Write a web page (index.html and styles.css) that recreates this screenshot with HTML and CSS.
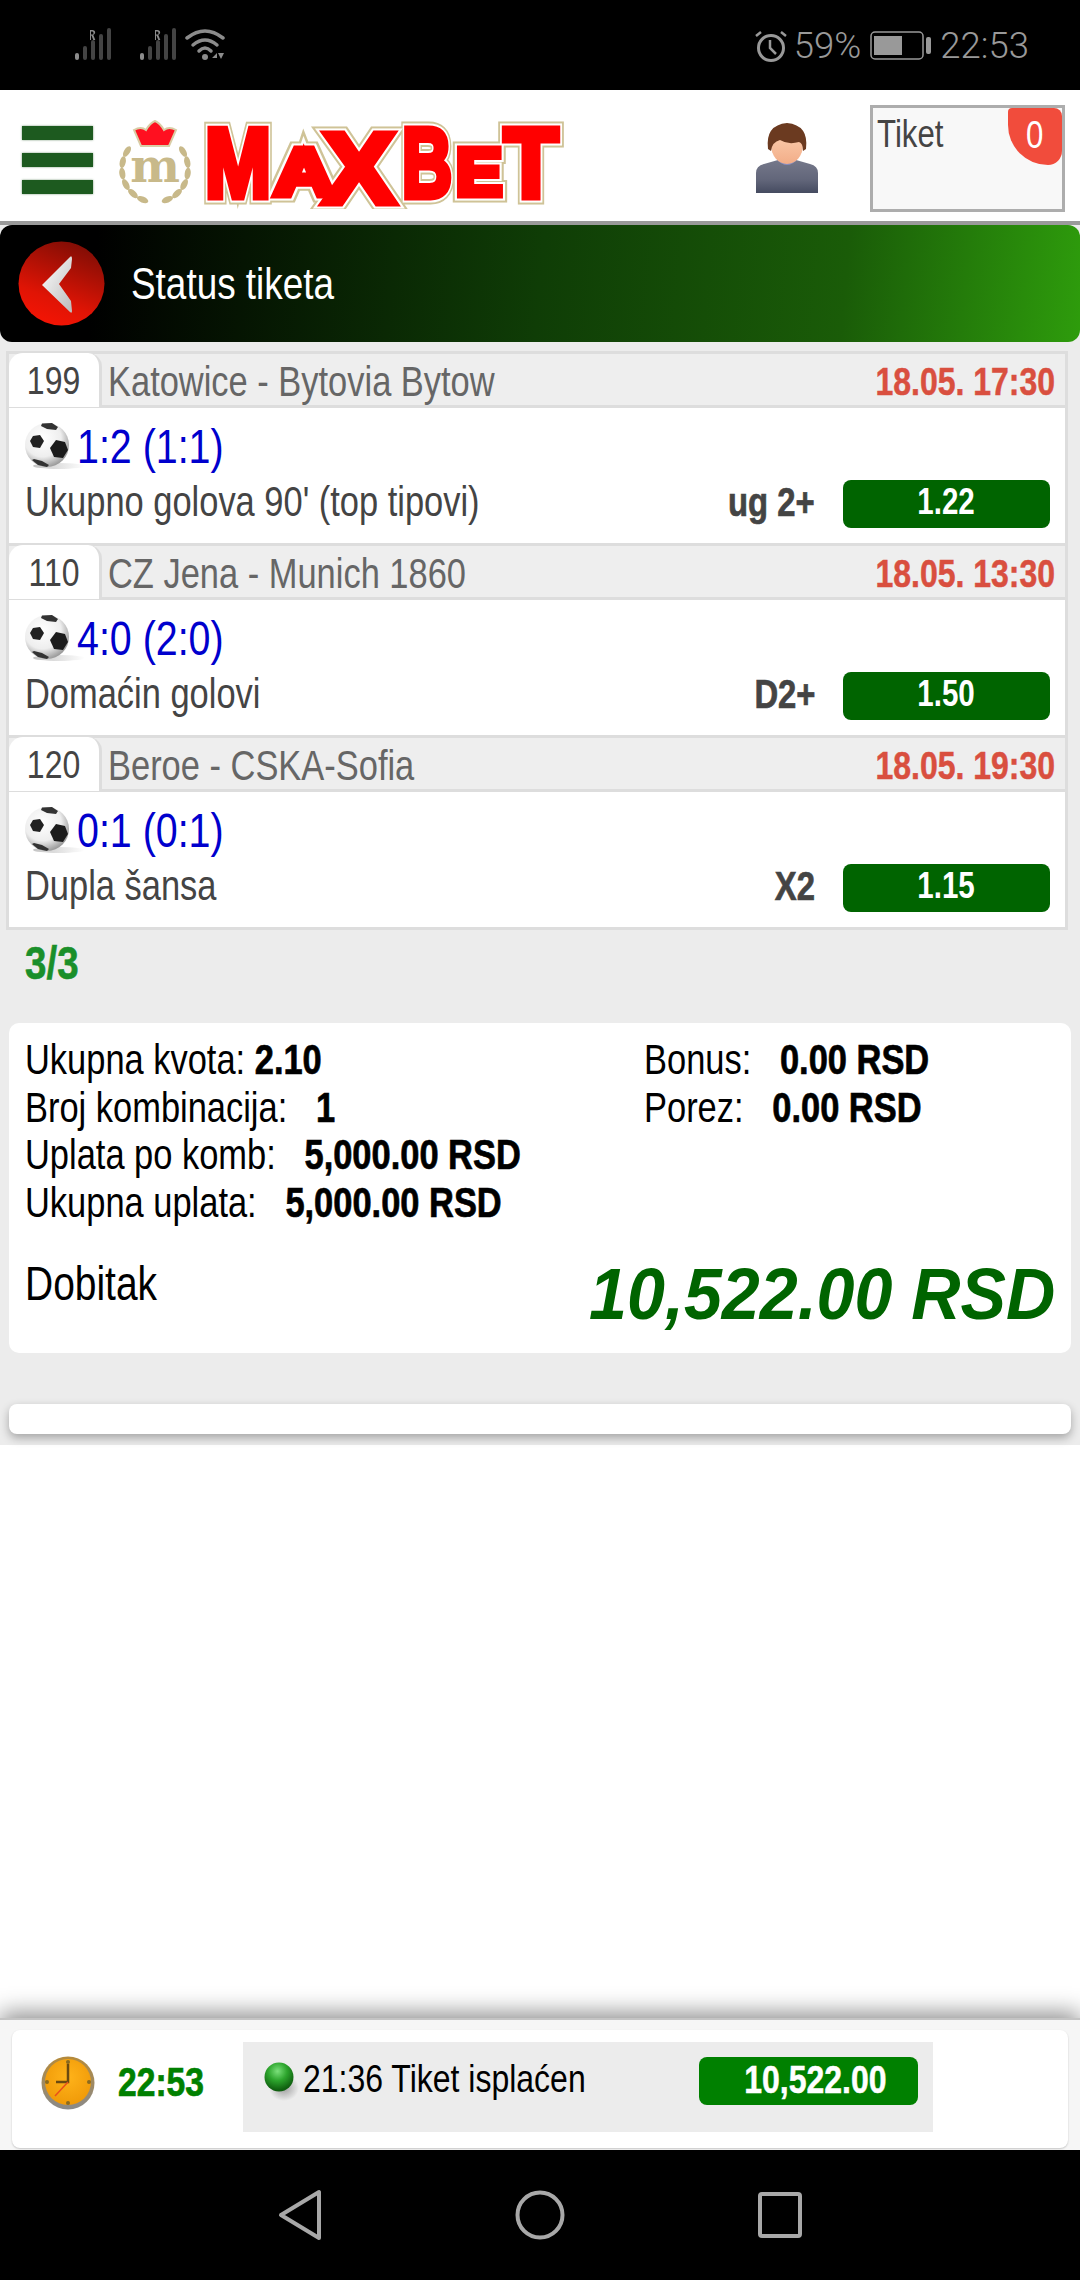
FILE: index.html

```html
<!DOCTYPE html>
<html lang="sr">
<head>
  <meta charset="UTF-8">
  <meta name="viewport" content="width=device-width, initial-scale=1.0">
  <title>Status tiketa</title>
  <link rel="stylesheet" href="styles.css">
</head>
<body>
  <svg class="defs" width="0" height="0" aria-hidden="true">
    <defs>
      <radialGradient id="ballGrad" cx="40%" cy="35%" r="70%">
        <stop offset="0" stop-color="#ffffff"/>
        <stop offset="0.6" stop-color="#eeeeee"/>
        <stop offset="1" stop-color="#8f8f8f"/>
      </radialGradient>
      <linearGradient id="ballShadow" x1="0" x2="1" y1="0" y2="0">
        <stop offset="0" stop-color="#aaaaaa" stop-opacity="0.7"/>
        <stop offset="1" stop-color="#aaaaaa" stop-opacity="0"/>
      </linearGradient>
      <symbol id="ball" viewBox="0 0 60 48">
        <ellipse cx="34" cy="44" rx="26" ry="3" fill="url(#ballShadow)"/>
        <circle cx="22" cy="23" r="22" fill="url(#ballGrad)"/>
        <path d="M31 18l9 2 3 8-5 8-9-1-4-9z" fill="#1c1c1c"/>
        <path d="M8 14l7-1 4 6-4 7-7-1-3-6z" fill="#222"/>
        <path d="M17 1.500l10-.5 6 4-2 3-9-1-6-3z" fill="#333"/>
        <path d="M9 37l8 2 7 4-2 2-9-2-6-5z" fill="#333"/>
      </symbol>
      <symbol id="signal" viewBox="0 0 36 36">
        <path d="M15 2h2.500q2 0 2.500 1.500 .5 1.500 -.5 2.500q-.5 .7 -1.200 1l2 5h-2l-1.800-4.500h-.5v4.500h-1zM16 3.500v3h1.500q1 0 1-1.500t-1-1.500z" fill="#8c8c8c"/>
        <rect x="0" y="25" width="4" height="7" rx="2" fill="#8c8c8c"/>
        <rect x="8" y="18" width="4" height="14" rx="2" fill="#444"/>
        <rect x="16" y="12" width="4" height="20" rx="2" fill="#444"/>
        <rect x="24" y="6" width="4" height="26" rx="2" fill="#444"/>
        <rect x="32" y="0" width="4" height="32" rx="2" fill="#444"/>
      </symbol>
    </defs>
  </svg>

  <div class="status-bar">
    <div class="status-left">
      <svg class="ico-signal" width="36" height="36"><use href="#signal"/></svg>
      <svg class="ico-signal second" width="36" height="36"><use href="#signal"/></svg>
      <svg class="ico-wifi" width="40" height="36" viewBox="0 0 40 36">
        <path d="M2 10Q20 -4 38 10" fill="none" stroke="#8c8c8c" stroke-width="3.500" stroke-linecap="round"/>
        <path d="M8 17Q20 7 32 17" fill="none" stroke="#8c8c8c" stroke-width="3.500" stroke-linecap="round"/>
        <path d="M14 23Q20 17 26 23" fill="none" stroke="#8c8c8c" stroke-width="3.500" stroke-linecap="round"/>
        <circle cx="20" cy="29" r="3" fill="#8c8c8c"/>
        <path d="M27 30l5-5v5zM33 25h6l-3 6z" fill="#8c8c8c"/>
      </svg>
    </div>
    <div class="status-right">
      <svg class="ico-alarm" width="33" height="33" viewBox="0 0 33 33">
        <circle cx="17" cy="18" r="12.500" fill="none" stroke="#999" stroke-width="3"/>
        <path d="M16 10v8l6 6" fill="none" stroke="#999" stroke-width="2.500"/>
        <path d="M2 6l5-4M32 6l-5-4" fill="none" stroke="#999" stroke-width="2.500"/>
      </svg>
      <span class="status-pct">59%</span>
      <svg class="ico-battery" width="62" height="30" viewBox="0 0 62 30">
        <rect x="1" y="1" width="52" height="27" rx="4" fill="none" stroke="#999" stroke-width="1.500"/>
        <rect x="4" y="5" width="28" height="19" fill="#999"/>
        <rect x="56" y="6" width="5" height="17" rx="2" fill="#999"/>
      </svg>
      <span class="status-time">22:53</span>
    </div>
  </div>

  <header class="top-bar">
    <div class="burger"><i></i><i></i><i></i></div>
    <svg class="logo" width="450" height="92" viewBox="0 0 450 92">
      <defs>
        <text id="logoWord" class="logo-word"><tspan x="87" y="80" font-size="98" textLength="66" lengthAdjust="spacingAndGlyphs">M</tspan><tspan x="156" y="78" font-size="66" textLength="60" lengthAdjust="spacingAndGlyphs">A</tspan><tspan x="205" y="86" font-size="100" textLength="72" lengthAdjust="spacingAndGlyphs">X</tspan><tspan x="284" y="80" font-size="98" textLength="50" lengthAdjust="spacingAndGlyphs">B</tspan><tspan x="338" y="78" font-size="66" textLength="46" lengthAdjust="spacingAndGlyphs">E</tspan><tspan x="386" y="80" font-size="98" textLength="54" lengthAdjust="spacingAndGlyphs">T</tspan></text>
      </defs>
      <!-- crest -->
      <g fill="#c8b98a">
        <ellipse cx="37" cy="19" rx="6" ry="3" transform="rotate(58 37 52)"/>
        <ellipse cx="37" cy="19" rx="6" ry="3" transform="rotate(78 37 52)"/>
        <ellipse cx="37" cy="19" rx="6" ry="3" transform="rotate(98 37 52)"/>
        <ellipse cx="37" cy="19" rx="6" ry="3" transform="rotate(118 37 52)"/>
        <ellipse cx="37" cy="19" rx="6" ry="3" transform="rotate(138 37 52)"/>
        <ellipse cx="37" cy="19" rx="6" ry="3" transform="rotate(158 37 52)"/>
        <ellipse cx="37" cy="19" rx="6" ry="3" transform="rotate(-58 37 52)"/>
        <ellipse cx="37" cy="19" rx="6" ry="3" transform="rotate(-78 37 52)"/>
        <ellipse cx="37" cy="19" rx="6" ry="3" transform="rotate(-98 37 52)"/>
        <ellipse cx="37" cy="19" rx="6" ry="3" transform="rotate(-118 37 52)"/>
        <ellipse cx="37" cy="19" rx="6" ry="3" transform="rotate(-138 37 52)"/>
        <ellipse cx="37" cy="19" rx="6" ry="3" transform="rotate(-158 37 52)"/>
      </g>
      <path d="M23 29L16 13Q23 9 28 13Q32 6 37 4Q42 6 46 13Q51 9 58 13L51 29z" fill="#ff1020" stroke="#d9cda6" stroke-width="2"/>
      <text x="37" y="65" class="logo-m">m</text>
      <use href="#logoWord" class="logo-outer"/>
      <use href="#logoWord" class="logo-inner"/>
      <use href="#logoWord" class="logo-fill"/>
    </svg>
    <div class="top-spacer"></div>
    <svg class="avatar" width="62" height="70" viewBox="0 0 62 70">
      <defs>
        <linearGradient id="shirt" x1="0" x2="0" y1="0" y2="1">
          <stop offset="0" stop-color="#75788a"/>
          <stop offset="0.6" stop-color="#62667a"/>
          <stop offset="1" stop-color="#454b60"/>
        </linearGradient>
        <linearGradient id="face" x1="0" x2="0" y1="0" y2="1">
          <stop offset="0" stop-color="#fdd3b4"/>
          <stop offset="1" stop-color="#f2ad88"/>
        </linearGradient>
      </defs>
      <path d="M0 70V50Q0 43 8 41L22 37H40L54 41Q62 43 62 50V70z" fill="url(#shirt)"/>
      <path d="M21 37q10 10 20 0v-1h-20z" fill="#8a8ec0"/>
      <path d="M23 28h16v8q-8 7-16 0z" fill="#f2ad88"/>
      <ellipse cx="31" cy="22" rx="16" ry="19" fill="url(#face)"/>
      <path d="M12 26Q9 2 31 0Q53 2 50 26L47 28Q47 20 43 19Q32 22 24 17Q16 19 15 28z" fill="#6b3a20"/>
    </svg>
    <div class="tiket-box">
      <span class="squeeze">Tiket</span>
      <span class="tiket-badge"><span class="squeeze-c">0</span></span>
    </div>
  </header>

  <div class="title-wrap">
    <div class="title-bar">
      <svg class="back-btn" width="87" height="85" viewBox="0 0 87 85">
        <defs>
          <linearGradient id="backBg" x1="0.700" x2="0.300" y1="0" y2="1">
            <stop offset="0" stop-color="#7e0d05"/>
            <stop offset="0.7" stop-color="#e01405"/>
            <stop offset="1" stop-color="#f61404"/>
          </linearGradient>
          <linearGradient id="backArrow" x1="0" x2="1" y1="0" y2="1">
            <stop offset="0" stop-color="#ffffff"/>
            <stop offset="1" stop-color="#bbbbbb"/>
          </linearGradient>
        </defs>
        <ellipse cx="43.500" cy="42.500" rx="43" ry="42" fill="url(#backBg)"/>
        <path d="M24 44L52 16Q54 14 54 18L53 27L41 43L53 60L54 70Q54 73 52 71z" fill="url(#backArrow)"/>
      </svg>
      <span class="title-text squeeze">Status tiketa</span>
    </div>
  </div>

  <main class="content">
    <section class="ticket-list">
      <article class="match">
        <div class="match-head">
          <span class="match-code"><span class="squeeze-c">199</span></span>
          <span class="match-teams squeeze">Katowice - Bytovia Bytow</span>
          <span class="match-date squeeze-r">18.05. 17:30</span>
        </div>
        <div class="match-body">
          <div class="score-row">
            <svg class="ball" width="60" height="48"><use href="#ball"/></svg>
            <span class="score squeeze">1:2 (1:1)</span>
          </div>
          <div class="market-row">
            <span class="market squeeze">Ukupno golova 90' (top tipovi)</span>
            <span class="pick squeeze-r">ug 2+</span>
            <span class="odd"><span class="squeeze-c">1.22</span></span>
          </div>
        </div>
      </article>
      <article class="match">
        <div class="match-head">
          <span class="match-code"><span class="squeeze-c">110</span></span>
          <span class="match-teams squeeze">CZ Jena - Munich 1860</span>
          <span class="match-date squeeze-r">18.05. 13:30</span>
        </div>
        <div class="match-body">
          <div class="score-row">
            <svg class="ball" width="60" height="48"><use href="#ball"/></svg>
            <span class="score squeeze">4:0 (2:0)</span>
          </div>
          <div class="market-row">
            <span class="market squeeze">Domaćin golovi</span>
            <span class="pick squeeze-r">D2+</span>
            <span class="odd"><span class="squeeze-c">1.50</span></span>
          </div>
        </div>
      </article>
      <article class="match">
        <div class="match-head">
          <span class="match-code"><span class="squeeze-c">120</span></span>
          <span class="match-teams squeeze">Beroe - CSKA-Sofia</span>
          <span class="match-date squeeze-r">18.05. 19:30</span>
        </div>
        <div class="match-body">
          <div class="score-row">
            <svg class="ball" width="60" height="48"><use href="#ball"/></svg>
            <span class="score squeeze">0:1 (0:1)</span>
          </div>
          <div class="market-row">
            <span class="market squeeze">Dupla šansa</span>
            <span class="pick squeeze-r">X2</span>
            <span class="odd"><span class="squeeze-c">1.15</span></span>
          </div>
        </div>
      </article>
    </section>

    <div class="hits"><span class="squeeze">3/3</span></div>

    <section class="summary">
      <div class="summary-cols">
        <div class="summary-left">
          <p class="squeeze">Ukupna kvota: <b>2.10</b></p>
          <p class="squeeze">Broj kombinacija: &nbsp; <b>1</b></p>
          <p class="squeeze">Uplata po komb: &nbsp; <b>5,000.00 RSD</b></p>
          <p class="squeeze">Ukupna uplata: &nbsp; <b>5,000.00 RSD</b></p>
        </div>
        <div class="summary-right">
          <p class="squeeze">Bonus: &nbsp; <b>0.00 RSD</b></p>
          <p class="squeeze">Porez: &nbsp; <b>0.00 RSD</b></p>
        </div>
      </div>
      <div class="payout">
        <span class="payout-label squeeze">Dobitak</span>
        <span class="payout-value">10,522.00 RSD</span>
      </div>
    </section>

    <div class="empty-card"></div>
  </main>

  <div class="page-spacer"></div>

  <footer class="bottom-bar">
    <div class="bottom-card">
      <svg class="clock" width="54" height="54" viewBox="0 0 54 54">
        <defs>
          <radialGradient id="clockFace" cx="50%" cy="40%" r="60%">
            <stop offset="0" stop-color="#ffb31a"/>
            <stop offset="1" stop-color="#f09a08"/>
          </radialGradient>
          <linearGradient id="clockRim" x1="0" x2="0" y1="0" y2="1">
            <stop offset="0" stop-color="#b58a3a"/>
            <stop offset="1" stop-color="#8a8a8a"/>
          </linearGradient>
        </defs>
        <circle cx="27" cy="27" r="26.500" fill="url(#clockRim)"/>
        <circle cx="27" cy="26" r="23" fill="url(#clockFace)"/>
        <path d="M27 8v18H15" fill="none" stroke="#6b4a10" stroke-width="2.500"/>
        <path d="M27 26L14 40" stroke="#e8501a" stroke-width="1.500"/>
        <circle cx="27" cy="6" r="2" fill="#8a6a20"/>
        <circle cx="27" cy="47" r="2" fill="#8a6a20"/>
        <circle cx="6" cy="26" r="2" fill="#8a6a20"/>
        <circle cx="48" cy="26" r="2" fill="#8a6a20"/>
      </svg>
      <span class="clock-time squeeze">22:53</span>
      <div class="notice">
        <svg class="notice-dot" width="36" height="40" viewBox="0 0 36 40">
          <defs>
            <radialGradient id="dotGrad" cx="45%" cy="30%" r="65%">
              <stop offset="0" stop-color="#7be07b"/>
              <stop offset="0.5" stop-color="#2da52d"/>
              <stop offset="1" stop-color="#0f5f0f"/>
            </radialGradient>
            <radialGradient id="dotShadow">
              <stop offset="0" stop-color="#888" stop-opacity="0.8"/>
              <stop offset="1" stop-color="#888" stop-opacity="0"/>
            </radialGradient>
          </defs>
          <ellipse cx="20" cy="26" rx="15" ry="13" fill="url(#dotShadow)"/>
          <circle cx="15" cy="15" r="14.500" fill="url(#dotGrad)"/>
        </svg>
        <span class="notice-text squeeze">21:36 Tiket isplaćen</span>
        <span class="notice-amount"><span class="squeeze-r">10,522.00</span></span>
      </div>
    </div>
  </footer>

  <nav class="nav-bar">
    <svg width="50" height="52" viewBox="0 0 50 52">
      <path d="M44 3V49L6 26z" fill="none" stroke="#a8a8a8" stroke-width="4" stroke-linejoin="round"/>
    </svg>
    <svg width="50" height="52" viewBox="0 0 50 52">
      <circle cx="25" cy="26" r="22.500" fill="none" stroke="#a8a8a8" stroke-width="4"/>
    </svg>
    <svg width="50" height="52" viewBox="0 0 50 52">
      <rect x="5" y="5" width="40" height="42" rx="2" fill="none" stroke="#a8a8a8" stroke-width="4"/>
    </svg>
  </nav>
</body>
</html>
```

FILE: styles.css

```css
* {
  box-sizing: border-box;
}

html, body {
  margin: 0;
  padding: 0;
}

body {
  width: 1080px;
  height: 2280px;
  display: flex;
  flex-direction: column;
  background: #fff;
  font-family: "Liberation Sans", sans-serif;
  overflow: hidden;
}

.defs {
  position: absolute;
}

/* the page font is a narrow one, not installed here */
.squeeze, .squeeze-c, .squeeze-r {
  display: inline-block;
  transform: scaleX(.82);
  white-space: nowrap;
}

.squeeze {
  transform-origin: left center;
}

.squeeze-c {
  transform-origin: center;
}

.squeeze-r {
  transform-origin: right center;
}

/* status bar */
.status-bar {
  height: 90px;
  background: #000;
  display: flex;
  justify-content: space-between;
  align-items: flex-start;
  flex: none;
  color: #999;
  font-family: Roboto, sans-serif;
  font-weight: 300;
  font-size: 36.500px;
}

.status-left {
  display: flex;
  padding: 28px 0 0 75px;
}

.ico-signal.second {
  margin-left: 29px;
}

.ico-wifi {
  margin-left: 9px;
}

.status-right {
  display: flex;
  align-items: center;
  padding: 26px 51px 0 0;
  line-height: 40px;
}

.status-pct {
  margin-left: 7px;
}

.ico-battery {
  margin-left: 9px;
}

.status-time {
  margin-left: 8px;
}

/* logo row */
.top-bar {
  height: 135px;
  flex: none;
  background: #fff;
  display: flex;
  align-items: flex-start;
  border-bottom: 4px solid #9a9a9a;
}

.burger {
  width: 71px;
  margin: 36px 0 0 22px;
  display: flex;
  flex-direction: column;
  gap: 13px;
}

.burger i {
  display: block;
  height: 14px;
  background: #1d5a1f;
  box-shadow: 0 0 2px #7a9a7a;
}

.logo {
  margin: 27px 0 0 25px;
}

.logo-word {
  font-family: "Liberation Sans", sans-serif;
  font-weight: 700;
}

.logo-outer {
  stroke: #cfc397;
  stroke-width: 15px;
  fill: #cfc397;
}

.logo-inner {
  stroke: #fff;
  stroke-width: 11px;
  fill: #fff;
}

.logo-fill {
  stroke: #ff0000;
  stroke-width: 7px;
  fill: #ff0000;
}

.logo-m {
  font-family: "DejaVu Serif", serif;
  font-weight: 700;
  font-size: 47px;
  fill: #c8b98a;
  text-anchor: middle;
}

.top-spacer {
  flex: 1;
}

.avatar {
  margin: 33px 52px 0 0;
}

.tiket-box {
  position: relative;
  width: 195px;
  height: 107px;
  margin: 15px 15px 0 0;
  padding: 4px 4px;
  border: 3px solid #adadad;
  background: #f8f8f8;
  color: #444;
  font-size: 38px;
  line-height: 44px;
}

.tiket-badge {
  position: absolute;
  top: 0;
  right: 0;
  width: 54px;
  height: 57px;
  background: #f14c3c;
  border-radius: 4px 8px 14px 40px;
  color: #fff;
  font-size: 38px;
  line-height: 54px;
  text-align: center;
}

/* title */
.title-wrap {
  flex: none;
  background: #ececec;
}

.title-bar {
  height: 117px;
  display: flex;
  align-items: center;
  padding-left: 18px;
  border-radius: 12px;
  background: linear-gradient(95deg, #000 9%, #0f3d06 50%, #1a5c08 78%, #2e9c0c 100%);
}

.title-text {
  margin-left: 26px;
  color: #fff;
  font-size: 45px;
}

/* page body */
.content {
  height: 1103px;
  flex: none;
  background: #ececec;
  padding-top: 9px;
}

.ticket-list {
  width: 1062px;
  margin-left: 6px;
  border-bottom: 3px solid #ddd;
}

.match {
  height: 192px;
  border: 3px solid #ddd;
  border-bottom: 0;
  background: #fff;
}

.match-head {
  height: 54px;
  display: flex;
  align-items: center;
  background: #eee;
  border-bottom: 3px solid #ddd;
}

.match-code {
  width: 93px;
  height: 54px;
  flex: none;
  background: #fff;
  border-right: 3px solid #ddd;
  border-radius: 14px 14px 0 0;
  color: #444;
  font-size: 39px;
  line-height: 56px;
  text-align: center;
}

.match-teams {
  flex: 1;
  margin: 5px 0 0 6px;
  color: #666;
  font-size: 42px;
}

.match-date {
  margin: 5px 10px 0 0;
  color: #d94f3f;
  font-size: 39px;
  font-weight: 700;
  -webkit-text-stroke: .5px #d94f3f;
}

.match-body {
  padding: 14px 15px 15px 16px;
}

.score-row {
  height: 50px;
  margin-top: -1px;
  display: flex;
  align-items: center;
}

.ball {
  flex: none;
}

.score {
  margin-left: -8px;
  color: #0000cd;
  font-size: 48px;
}

.market-row {
  height: 48px;
  margin-top: 9px;
  display: flex;
  align-items: center;
  color: #444;
}

.market {
  flex: 1;
  margin-bottom: 4px;
  font-size: 42px;
}

.pick {
  margin: 0 28px 4px 0;
  font-size: 40px;
  font-weight: 700;
  -webkit-text-stroke: .7px #444;
}

.odd {
  width: 207px;
  height: 48px;
  flex: none;
  background: #006400;
  border-radius: 8px;
  color: #fff;
  font-size: 36px;
  font-weight: 700;
  line-height: 44px;
  text-align: center;
}

.hits {
  height: 48px;
  margin: 9px 0 0 25px;
  color: #1a8f2a;
  font-size: 47px;
  font-weight: 700;
  line-height: 48px;
  -webkit-text-stroke: .6px #1a8f2a;
}

.summary {
  width: 1062px;
  height: 330px;
  margin: 36px 0 0 9px;
  padding: 13px 16px 0;
  background: #fff;
  border-radius: 10px;
  color: #000;
  font-size: 42px;
}

.summary p {
  display: block;
  margin: 0;
  line-height: 47.500px;
}

.summary b {
  -webkit-text-stroke: .7px #000;
}

.summary-cols {
  display: flex;
}

.summary-left {
  width: 619px;
  flex: none;
}

.payout {
  display: flex;
  justify-content: space-between;
  align-items: flex-start;
  margin-top: 30px;
}

.payout-label {
  font-size: 47.500px;
  line-height: 56px;
}

.payout-value {
  color: #006400;
  font-size: 72px;
  font-style: italic;
  font-weight: 700;
  line-height: 76px;
  transform: scaleX(.947);
  transform-origin: right center;
}

.empty-card {
  width: 1062px;
  height: 30px;
  margin: 51px 0 0 9px;
  background: #fff;
  border-radius: 8px;
  box-shadow: 0 4px 10px rgba(0, 0, 0, .3);
}

.page-spacer {
  flex: 1;
}

/* bottom strip */
.bottom-bar {
  position: relative;
  height: 132px;
  flex: none;
  padding: 10px 12px 2px;
  background: #f6f6f6;
  border-top: 2px solid #c4c4c4;
  box-shadow: 0 -5px 22px rgba(0, 0, 0, .45);
}

.bottom-card {
  height: 118px;
  display: flex;
  align-items: flex-start;
  padding: 12px 0 0 29px;
  background: #fff;
  border-radius: 8px;
  box-shadow: 0 1px 2px rgba(0, 0, 0, .2);
}

.clock {
  flex: none;
  margin-top: 14px;
}

.clock-time {
  width: 125px;
  flex: none;
  margin: 17px 0 0 23px;
  color: #008000;
  font-size: 41px;
  font-weight: 700;
  line-height: 46px;
  -webkit-text-stroke: .7px #008000;
}

.notice {
  width: 690px;
  height: 90px;
  flex: none;
  display: flex;
  align-items: flex-start;
  padding: 15px 15px 0 21px;
  background: #ececec;
}

.notice-dot {
  flex: none;
  margin: 5px 3px 0 0;
}

.notice-text {
  flex: 1;
  color: #000;
  font-size: 39px;
  line-height: 44px;
}

.notice-amount {
  width: 219px;
  height: 48px;
  flex: none;
  padding-right: 31px;
  background: #008000;
  border-radius: 8px;
  color: #fff;
  font-size: 39px;
  font-weight: 700;
  line-height: 46px;
  text-align: right;
  -webkit-text-stroke: .5px #fff;
}

/* android buttons */
.nav-bar {
  height: 130px;
  flex: none;
  background: #000;
  display: flex;
  justify-content: center;
  gap: 190px;
  padding-top: 39px;
}
```
